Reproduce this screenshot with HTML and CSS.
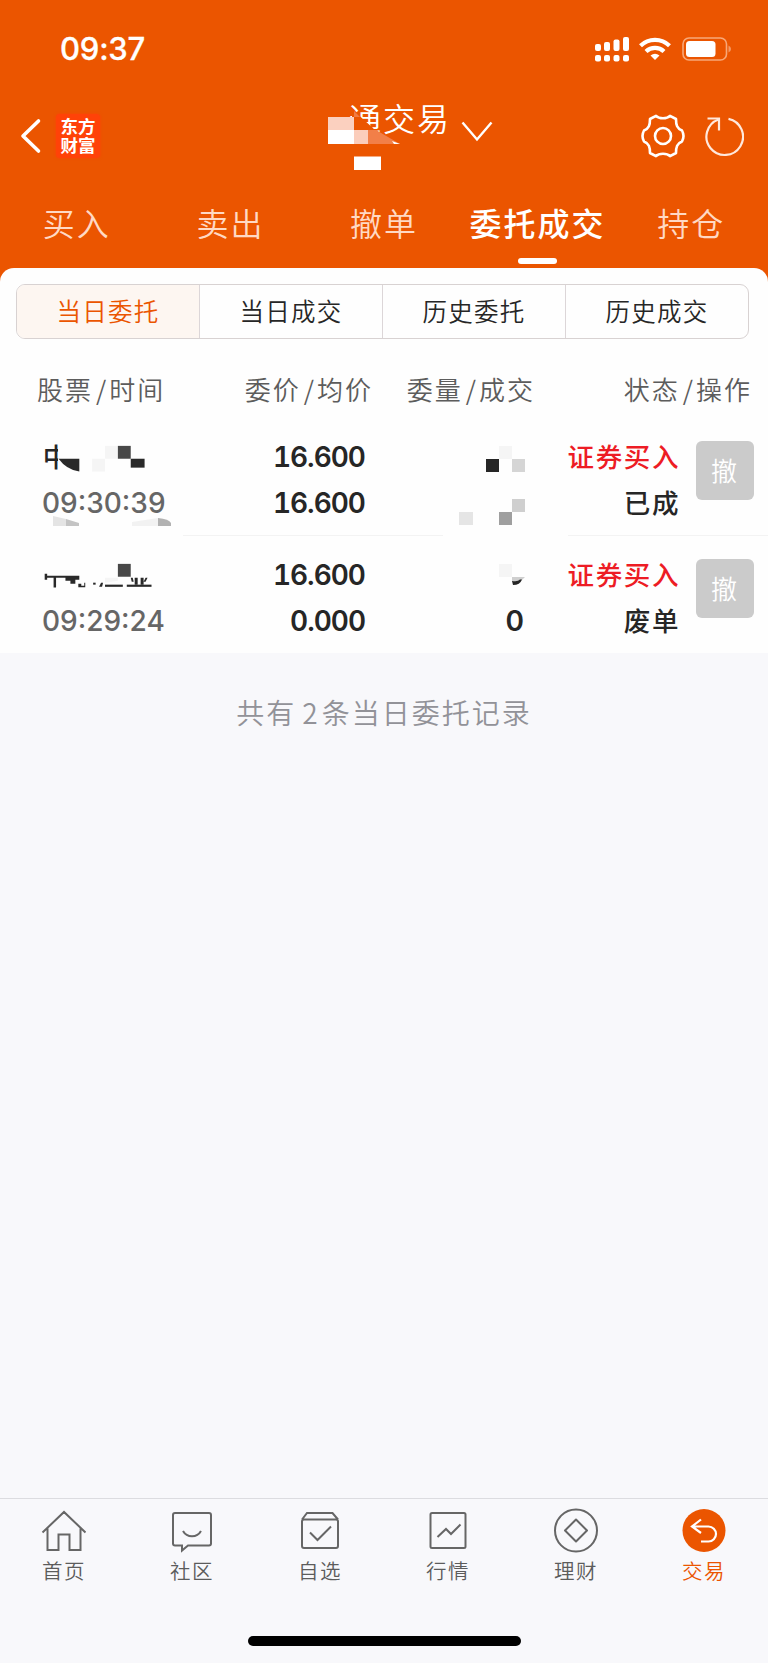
FILE: index.html
```
<!DOCTYPE html>
<html lang="zh-CN">
<head>
    <meta charset="UTF-8">
    <meta name="viewport" content="width=device-width, initial-scale=1.0">
    <title>委托成交</title>
    <link rel="stylesheet" href="styles.css">
</head>
<body>
    <header class="header">
        <div class="status-bar">
            <span class="clock">09:37</span>
            <div class="status-icons">
                <svg width="34" height="26" viewBox="0 0 34 26" fill="#fff">
                    <rect x="0" y="8" width="6" height="7" rx="2"/>
                    <rect x="9" y="6" width="6" height="9" rx="2"/>
                    <rect x="18.500" y="3.500" width="6" height="11.500" rx="2"/>
                    <rect x="28" y="1" width="6" height="14" rx="2"/>
                    <rect x="0" y="19" width="6" height="6.500" rx="2"/>
                    <rect x="9" y="19" width="6" height="6.500" rx="2"/>
                    <rect x="18.500" y="19" width="6" height="6.500" rx="2"/>
                    <rect x="28" y="19" width="6" height="6.500" rx="2"/>
                </svg>
                <svg class="wifi" width="32" height="24" viewBox="0 0 32 24" fill="none" stroke="#fff" stroke-width="4.200">
                    <path d="M1.500 8.800C9.500 0.900 22.500 0.900 30.500 8.800"/>
                    <path d="M7 14.500C12 9.700 20 9.700 25 14.500"/>
                    <path d="M11.500 18.600Q16 15 20.500 18.600L16 23Z" fill="#fff" stroke="none"/>
                </svg>
                <svg class="battery" width="50" height="24" viewBox="0 0 50 24">
                    <rect x="1" y="1" width="43.500" height="22" rx="6" fill="none" stroke="#f8a878" stroke-width="1.600"/>
                    <rect x="4" y="4" width="29.500" height="16" rx="3.500" fill="#fff"/>
                    <path d="M46.500 8.500Q49 9.500 49 12T46.500 15.500Z" fill="#f59a66"/>
                </svg>
            </div>
        </div>

        <div class="nav">
            <svg class="back" width="22" height="36" viewBox="0 0 22 36" fill="none" stroke="#fff" stroke-width="3.600" stroke-linecap="round" stroke-linejoin="round">
                <path d="M18.500 3L3 18L18.500 33"/>
            </svg>
            <div class="logo"><span>东方</span><span>财富</span></div>
            <div class="title">
                <span>通交易</span>
                <svg class="chevron" width="32" height="22" viewBox="0 0 32 22" fill="none" stroke="#fff" stroke-width="2.400">
                    <path d="M1.500 1.500L16 18.500L30.500 1.500"/>
                </svg>
                <!-- 账户名打码 -->
                <svg class="title-mask" width="74" height="60" viewBox="0 0 74 60">
                    <path d="M24 -1L47 20L72 34H24Z" fill="#eb5500"/>
                    <rect x="0" y="7" width="26" height="13" fill="#fbd0bf"/>
                    <rect x="0" y="20" width="26" height="14" fill="#fff"/>
                    <rect x="26" y="20" width="14" height="14" fill="#fbcdbb"/>
                    <path d="M26 1L32 7H26Z" fill="#f17c43"/>
                    <path d="M40 20H48L72 34H40Z" fill="#f27f48"/>
                    <path d="M64 31L72 34H66Z" fill="#fff"/>
                    <rect x="26" y="46.500" width="27" height="13.500" fill="#fff"/>
                </svg>
            </div>
            <div class="nav-actions">
                <svg width="46" height="46" viewBox="0 0 46 46" fill="none" stroke="#fff" stroke-width="2.600" stroke-linejoin="round">
                    <path d="M16 2.800C19 6 27 6 30 2.800L36 6C36 12 37 15.500 42 17.500Q45 23 42 28.500C37 30.500 36 34 36 40L30 43.200C27 40 19 40 16 43.200L10 40C10 34 9 30.500 4 28.500Q1 23 4 17.500C9 15.500 10 12 10 6Z"/>
                    <circle cx="23" cy="23" r="8"/>
                </svg>
                <svg class="refresh" width="40" height="42" viewBox="0 0 40 42" fill="none" stroke="#ffe8dc" stroke-width="2.200">
                    <path d="M24.500 3.800A18.300 18.300 0 1 1 14.500 4.500"/>
                    <path d="M3.500 3.500H15V15.500"/>
                </svg>
            </div>
        </div>

        <nav class="tabs">
            <a class="tab">买入</a>
            <a class="tab">卖出</a>
            <a class="tab">撤单</a>
            <a class="tab active">委托成交</a>
            <a class="tab">持仓</a>
        </nav>
    </header>

    <main class="sheet">
        <div class="segments">
            <a class="segment active">当日委托</a>
            <a class="segment">当日成交</a>
            <a class="segment">历史委托</a>
            <a class="segment">历史成交</a>
        </div>

        <div class="list-head">
            <div>股票<span class="slash">/</span>时间</div>
            <div>委价<span class="slash">/</span>均价</div>
            <div>委量<span class="slash">/</span>成交</div>
            <div>状态<span class="slash">/</span>操作</div>
        </div>

        <div class="order">
            <div class="stock">
                <svg class="name" width="130" height="46" viewBox="0 0 130 46">
                    <clipPath id="half"><rect x="0" y="0" width="15.500" height="46"/></clipPath>
                    <text class="name-text" x="0" y="32" clip-path="url(#half)">中</text>
                    <path d="M16 24H37V37Q24 35 16 24Z" fill="#292929"/>
                    <rect x="50" y="24" width="13" height="13" fill="#f5f5f5"/>
                    <rect x="63" y="11" width="13" height="13" fill="#f5f5f5"/>
                    <rect x="76" y="11" width="13" height="13" fill="#484848"/>
                    <rect x="89" y="24" width="14" height="9" fill="#292929"/>
                </svg>
                <span class="time">09:30:39</span>
                <svg class="smudge" width="120" height="11" viewBox="0 0 120 11">
                    <path d="M0 0L13 3V10H0Z" fill="#e4e4e4"/>
                    <path d="M13 3L26 7V10H13Z" fill="#c4c4c4"/>
                    <path d="M79 6L105 2V10H79Z" fill="#f2f2f2"/>
                    <path d="M105 2Q116 3 118 7V10H105Z" fill="#b2b2b2"/>
                </svg>
            </div>
            <div class="price"><span>16.600</span><span>16.600</span></div>
            <div class="volume">
                <svg class="blocks" width="68" height="92" viewBox="0 0 68 92">
                    <rect x="40" y="11" width="13" height="13" fill="#f5f5f5"/>
                    <rect x="27" y="24" width="13" height="13" fill="#262626"/>
                    <rect x="53" y="24" width="13" height="13" fill="#d5d5d5"/>
                    <rect x="53" y="64" width="13" height="13" fill="#cfcfcf"/>
                    <rect x="0" y="77" width="14" height="13" fill="#e5e5e5"/>
                    <rect x="40" y="77" width="13" height="13" fill="#9f9f9f"/>
                </svg>
            </div>
            <div class="state"><span class="buy">证券买入</span><span>已成</span></div>
            <button class="cancel">撤</button>
        </div>

        <div class="divider"><i></i><i></i></div>

        <div class="order">
            <div class="stock">
                <svg class="name" width="130" height="46" viewBox="0 0 130 46" fill="#292929">
                    <path d="M2 21H4.500V23H37V27H33V31H28V28H23V25H13.500V35H11V25H4.500V27H2Z"/>
                    <path d="M36 31H39V33H42V30H43V34.500H36Z"/>
                    <rect x="51" y="30" width="2.500" height="2"/>
                    <path d="M59 30H61L60 34H57Z"/>
                    <rect x="63" y="32" width="18" height="2.200"/>
                    <path d="M63 25H76V28L63 30Z" fill="#f5f5f5"/>
                    <rect x="76" y="11" width="13" height="13" fill="#484848"/>
                    <path d="M89 25H91L92 29H90ZM93 25H96V32H93ZM99 25H102V32H99ZM104 25H106L104 29H102Z"/>
                    <rect x="85" y="32" width="25" height="2.200"/>
                </svg>
                <span class="time">09:29:24</span>
            </div>
            <div class="price"><span>16.600</span><span>0.000</span></div>
            <div class="volume">
                <svg class="blocks" width="68" height="46" viewBox="0 0 68 46">
                    <rect x="40" y="11" width="13" height="13" fill="#f5f5f5"/>
                    <path d="M53 24H66L62 28L53 29Z" fill="#cfcfcf"/>
                    <path d="M53 28Q59 29 61 26.500H63Q61 32 54 32Z" fill="#262626"/>
                </svg>
                <span>0</span>
            </div>
            <div class="state"><span class="buy">证券买入</span><span>废单</span></div>
            <button class="cancel">撤</button>
        </div>
    </main>

    <p class="summary">共有<span class="count">2</span>条当日委托记录</p>

    <footer class="tabbar">
        <a class="tabbar-item">
            <svg width="46" height="46" viewBox="0 0 46 46">
                <path d="M1.500 24.500L23 4L44.500 24.500M6.500 20.500V42H17.500V26.500H28.500V42H39.500V20.500"/>
            </svg>
            首页
        </a>
        <a class="tabbar-item">
            <svg width="46" height="46" viewBox="0 0 46 46">
                <path d="M6 5H40Q42 5 42 7V35.500Q42 37.500 40 37.500H19L13 42.500V37.500H6Q4 37.500 4 35.500V7Q4 5 6 5Z"/>
                <path d="M14 23C18 30 28 30 32 23"/>
            </svg>
            社区
        </a>
        <a class="tabbar-item">
            <svg width="46" height="46" viewBox="0 0 46 46">
                <path d="M5 11.500L10 5H35.500L41 11.500M7 11.500H39Q41 11.500 41 13.500V38Q41 40 39 40H7Q5 40 5 38V13.500Q5 11.500 7 11.500Z"/>
                <path d="M13 24.500L20.500 32L34 18.500"/>
            </svg>
            自选
        </a>
        <a class="tabbar-item">
            <svg width="46" height="46" viewBox="0 0 46 46">
                <rect x="5.500" y="5" width="35" height="35" rx="1.500"/>
                <path d="M12.500 29L21 21L26 26L35.500 16.500"/>
            </svg>
            行情
        </a>
        <a class="tabbar-item">
            <svg width="46" height="46" viewBox="0 0 46 46">
                <circle cx="23" cy="22.500" r="21"/>
                <path d="M23 11.500L34 22.500L23 33.500L12 22.500Z" stroke-linejoin="round"/>
            </svg>
            理财
        </a>
        <a class="tabbar-item active">
            <svg width="46" height="46" viewBox="0 0 46 46">
                <circle class="disc" cx="23" cy="22.500" r="21.500"/>
                <path class="arrow" d="M20 11.500L11 18.500L20 25M11 18.500H27.500A7.500 7.500 0 0 1 27.500 33.500H20"/>
            </svg>
            交易
        </a>
    </footer>
    <div class="home-indicator"></div>
</body>
</html>
```

FILE: styles.css
```
* {
    box-sizing: border-box;
}
body {
    margin: 0;
    width: 768px;
    height: 1663px;
    display: flex;
    flex-direction: column;
    background: #f8f8fb;
    font-family: Inter, "Noto Sans CJK SC", sans-serif;
    color: #262626;
    overflow: hidden;
}
svg {
    display: block;
    flex: none;
}

/* 顶部 */
.header {
    height: 284px;
    background: #eb5500;
    color: #fff;
}
.status-bar {
    display: flex;
    justify-content: space-between;
    align-items: center;
    height: 98px;
    padding: 0 36px 0 60px;
}
.clock {
    padding-bottom: 1px;
    font-size: 31px;
    font-weight: 500;
    letter-spacing: -0.200px;
    -webkit-text-stroke: 0.3px #fff;
}
.status-icons {
    display: flex;
    align-items: center;
}
.wifi {
    margin-left: 10px;
}
.battery {
    margin-left: 11px;
}
.nav {
    display: flex;
    align-items: center;
    height: 76px;
    padding: 0 24px 0 20px;
}
.logo {
    display: flex;
    flex-direction: column;
    justify-content: center;
    align-items: center;
    width: 44px;
    height: 44px;
    margin-left: 14px;
    border-radius: 4px;
    background: #ff4208;
    box-shadow: 0 0 3px #ff4208;
    font-size: 17.500px;
    font-weight: 700;
    line-height: 19px;
}
.title {
    position: relative;
    display: flex;
    align-items: center;
    margin-left: 249px;
    font-family: "Noto Sans CJK SC", sans-serif;
    font-size: 32px;
    font-weight: 350;
    letter-spacing: 2px;
    line-height: 44px;
    padding-bottom: 38px;
}
.chevron {
    margin: 30px 0 0 10px;
}
.title-mask {
    position: absolute;
    left: -21px;
    top: 19px;
    overflow: visible;
}
.nav-actions {
    display: flex;
    align-items: center;
    margin-left: auto;
}
.refresh {
    margin-left: 18px;
}
.tabs {
    display: flex;
    height: 94px;
    padding-top: 24px;
}
.tab {
    position: relative;
    flex: 1;
    text-align: center;
    font-family: "Noto Sans CJK SC", sans-serif;
    font-size: 32px;
    font-weight: 350;
    letter-spacing: 2px;
    line-height: 48px;
    white-space: nowrap;
    color: #ffd9c4;
}
.tab.active {
    font-weight: 500;
    color: #fff;
}
.tab.active::after {
    content: "";
    position: absolute;
    left: 57px;
    bottom: 4px;
    width: 39px;
    height: 6px;
    border-radius: 3px;
    background: #fff;
}

/* 委托列表 */
.sheet {
    height: 385px;
    margin-top: -16px;
    padding-top: 16px;
    border-radius: 14px 14px 0 0;
    background: #fefefe;
}
.segments {
    display: flex;
    height: 55px;
    margin: 0 19px 0 16px;
    border: 1px solid #d8d2d2;
    border-radius: 9px;
    overflow: hidden;
}
.segment {
    flex: 1;
    text-align: center;
    font-family: "Noto Sans CJK SC", sans-serif;
    font-size: 24.500px;
    letter-spacing: 1.200px;
    line-height: 52px;
    font-weight: 350;
}
.segment + .segment {
    border-left: 1px solid #dcd6d8;
}
.segment.active {
    background: #fdf6f1;
    color: #eb5500;
}
.list-head {
    display: grid;
    grid-template-columns: 189px 147px 162px 217px;
    height: 95px;
    padding: 30px 0 0 37px;
    font-family: "Noto Sans CJK SC", sans-serif;
    font-size: 26px;
    font-weight: 350;
    letter-spacing: 2px;
    line-height: 40px;
    color: #5c5c5c;
    white-space: nowrap;
}
.list-head div + div {
    text-align: right;
}
.slash {
    margin: 0 1px 0 3px;
}
.order {
    display: grid;
    grid-template-columns: 200px 124px 158px 156px 58px;
    height: 101px;
    padding: 1px 0 0 42px;
    font-size: 28px;
    font-weight: 600;
    line-height: 45.500px;
}
.price,
.volume,
.state {
    display: flex;
    flex-direction: column;
    align-items: flex-end;
}
.price {
    font-variant-numeric: tabular-nums;
    letter-spacing: -1px;
    padding-right: 1px;
}
.name-text {
    font-family: "Noto Sans CJK SC", sans-serif;
    font-size: 27px;
    font-weight: 500;
    fill: #262626;
}
.name {
    height: 45.500px;
}
.time {
    display: block;
    color: #666;
    font-weight: 500;
}
.smudge {
    margin: -10px 0 0 11px;
}
.blocks {
    margin-right: -3px;
}
.volume svg + span {
    margin-top: -0.500px;
}
.state {
    margin-top: -2px;
    font-family: "Noto Sans CJK SC", sans-serif;
    font-size: 26.500px;
    font-weight: 500;
    letter-spacing: 1.600px;
}
.buy {
    color: #ed1c24;
}
.cancel {
    width: 58px;
    height: 59px;
    margin: 6px 0 0 16px;
    padding: 0 2px 2px 0;
    border: none;
    border-radius: 6px;
    background: #cbcbcb;
    color: #fff;
    font: 350 26px/54px "Noto Sans CJK SC", sans-serif;
}
.divider {
    display: flex;
    height: 17px;
    padding-left: 183px;
}
.divider i {
    width: 260px;
    height: 1px;
    background: #f3f3f3;
}
.divider i + i {
    flex: 1;
    margin-left: 125px;
}
.summary {
    margin: 0;
    padding-top: 38px;
    text-align: center;
    font-family: "Noto Sans CJK SC", sans-serif;
    font-size: 28px;
    font-weight: 350;
    letter-spacing: 2px;
    line-height: 42px;
    color: #929298;
}
.count {
    margin: 0 2px 0 6px;
}

/* 底部导航 */
.tabbar {
    display: flex;
    height: 138px;
    margin-top: auto;
    padding-top: 9px;
    border-top: 1px solid #dcdce0;
}
.tabbar-item {
    flex: 1;
    display: flex;
    flex-direction: column;
    align-items: center;
    font-family: "Noto Sans CJK SC", sans-serif;
    font-size: 20.500px;
    font-weight: 350;
    letter-spacing: 1.500px;
    line-height: 32px;
    color: #5c5c5c;
}
.tabbar-item svg {
    fill: none;
    stroke: #666;
    stroke-width: 2;
}
.tabbar-item.active {
    color: #eb5500;
}
.tabbar-item .disc {
    fill: #eb5500;
    stroke: none;
}
.tabbar-item .arrow {
    stroke: #fff;
    stroke-width: 2.200;
}
.home-indicator {
    flex: none;
    width: 273px;
    height: 10px;
    margin: 0 0 17px 248px;
    border-radius: 5px;
    background: #000;
}
```
